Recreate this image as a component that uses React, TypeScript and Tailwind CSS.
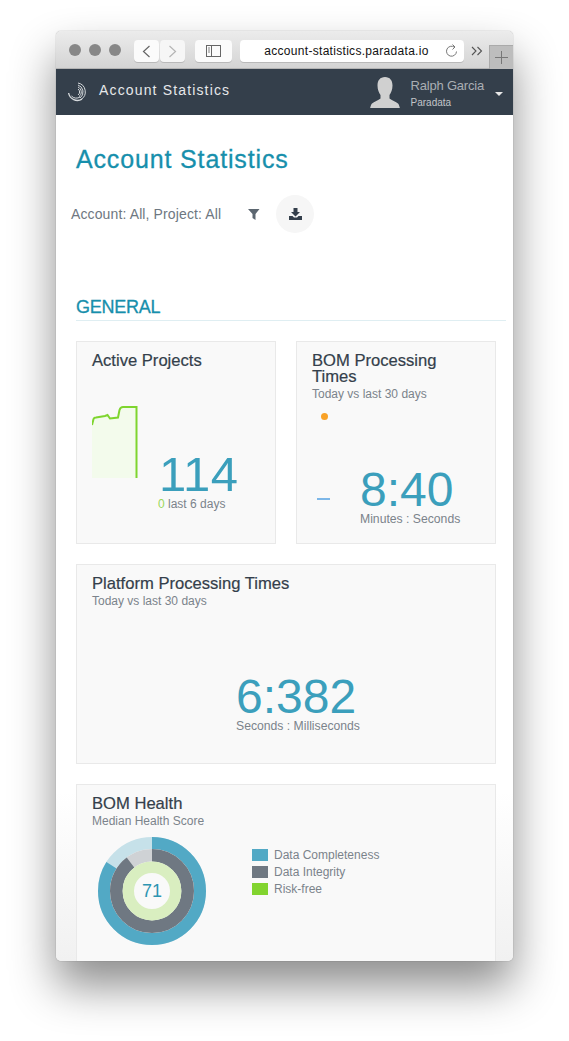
import React from "react";

const sans = "font-['Liberation_Sans',Arial,sans-serif]";

function Logo() {
  return (
    <svg width="20" height="20" viewBox="0 0 20 20" fill="none" stroke="#d5d9dc">
      <path d="M11 1 A9 9 0 0 1 14 17.500" strokeWidth="1" />
      <path d="M11 3 A7.400 7.400 0 0 1 13 16" strokeWidth="1" />
      <path d="M11 5 A5.600 5.600 0 0 1 12 14.600" strokeWidth="1" />
      <path d="M11 7 A3.600 3.600 0 0 1 11 13" strokeWidth="1" />
      <path d="M15 17.200 A9 9 0 0 1 1.600 11" strokeWidth="1.400" />
      <path d="M13 15 A6.500 6.500 0 0 1 4.500 14" strokeWidth="1" />
    </svg>
  );
}

function Avatar() {
  return (
    <svg width="30" height="31" viewBox="0 0 30 31" fill="#d0d0d0">
      <path d="M15 0c5 0 7.500 3.500 7.500 8.500 0 4-1.500 7.500-3 9.500v3.500c2 2 6.500 3 8.500 5 1 1 1.500 3 2 5H0c.5-2 1-4 2-5 2-2 6.500-3 8.500-5V18c-1.500-2-3-5.500-3-9.500C7.500 3.500 10 0 15 0z" />
    </svg>
  );
}

function Toolbar() {
  return (
    <div className="flex h-[38px] shrink-0 items-start border-b border-[#b4b4b4] bg-gradient-to-b from-[#ececec] to-[#d4d4d4]">
      <div className="mt-[13px] ml-[13px] flex gap-[8px]">
        <span className="h-[12px] w-[12px] rounded-full bg-[#878787]" />
        <span className="h-[12px] w-[12px] rounded-full bg-[#878787]" />
        <span className="h-[12px] w-[12px] rounded-full bg-[#878787]" />
      </div>
      <div className="mt-[9px] ml-[13px] flex gap-px">
        <div className="flex h-[22px] w-[25px] items-center justify-center rounded-[4px] bg-[#fbfbfb] shadow-[0_1px_0_#b9b9b9]">
          <svg width="9" height="13" viewBox="0 0 9 13" fill="none" stroke="#666" strokeWidth="1.200">
            <path d="M7.500 1 L1.500 6.500 L7.500 12" />
          </svg>
        </div>
        <div className="flex h-[22px] w-[25px] items-center justify-center rounded-[4px] bg-[#f6f6f6] shadow-[0_1px_0_#b9b9b9]">
          <svg width="9" height="13" viewBox="0 0 9 13" fill="none" stroke="#b5b5b5" strokeWidth="1.200">
            <path d="M1.500 1 L7.500 6.500 L1.500 12" />
          </svg>
        </div>
      </div>
      <div className="mt-[9px] ml-[10px] flex h-[22px] w-[37px] items-center justify-center rounded-[4px] bg-[#fbfbfb] shadow-[0_1px_0_#b9b9b9]">
        <svg width="15" height="12" viewBox="0 0 15 12" fill="none" stroke="#666">
          <rect x="0.500" y="0.500" width="14" height="11" />
          <path d="M5.500 .5 V11.500" />
          <path d="M2 3h2M2 5h2M2 7h2" strokeWidth=".8" />
        </svg>
      </div>
      <div className="relative mt-[9px] ml-[8px] flex h-[22px] w-[224px] items-center justify-center rounded-[4px] bg-white pr-[11px] shadow-[0_1px_0_#b9b9b9]">
        <span className={`${sans} text-[12px] tracking-[0.3px] text-[#111]`}>account-statistics.paradata.io</span>
        <svg className="absolute top-[4px] right-[6px]" width="13" height="14" viewBox="0 0 13 14" fill="none" stroke="#777">
          <path d="M9.500 3.200 A5 5 0 1 0 11.500 7.500" />
          <path d="M7.500 0.500 L10 3 L7.500 5.500" />
        </svg>
      </div>
      <span className="mt-[14px] ml-[7px] h-[12px] w-[12px]">
        <svg width="12" height="12" viewBox="0 0 12 12" fill="none" stroke="#555" strokeWidth="1.100">
          <path d="M1 2 L5 6 L1 10 M6.500 2 L10.500 6 L6.500 10" />
        </svg>
      </span>
      <div className="mt-[14px] ml-[6px] flex h-[24px] w-[24px] items-center justify-center border-t border-l border-[#aaa] bg-[#bdbdbd]">
        <svg width="13" height="13" viewBox="0 0 13 13" stroke="#777">
          <path d="M6.500 0 V13 M0 6.500 H13" />
        </svg>
      </div>
    </div>
  );
}

function Navbar() {
  return (
    <div className={`${sans} flex h-[46px] shrink-0 items-center bg-[#343f4b] pr-[10px] pl-[11px]`}>
      <Logo />
      <span className="mb-[4px] ml-[12px] text-[14px] tracking-[1.150px] text-[#e6e8ea]">Account Statistics</span>
      <div className="ml-auto flex items-center">
        <Avatar />
        <div className="mt-[3px] ml-[11px] flex flex-col">
          <span className="text-[13px] leading-[16px] tracking-[-0.2px] text-[#a9aeb3]">Ralph Garcia</span>
          <span className="mt-[3px] text-[10px] leading-[12px] text-[#c2c5c9]">Paradata</span>
        </div>
        <span className="mt-[3px] ml-[11px] h-0 w-0 border-x-[4px] border-t-[4px] border-x-transparent border-t-[#e8e8e8]" />
      </div>
    </div>
  );
}

function Card({ title, sub, className, children }: { title: string; sub?: string; className: string; children?: React.ReactNode }) {
  return (
    <div className={`border border-[#e9e9e9] bg-[#f9f9f9] pt-[11px] pl-[15px] ${className}`}>
      <div className="text-[16.600px] leading-[16px] whitespace-pre-line text-[#343f4b] [-webkit-text-stroke:0.2px_#343f4b]">{title}</div>
      {sub && <div className="text-[12px] leading-[18px] text-[#7b838b]">{sub}</div>}
      {children}
    </div>
  );
}

function Donut() {
  return (
    <svg width="110" height="110" viewBox="0 0 110 110" fill="none" className="-rotate-90">
      <circle cx="55" cy="55" r="48" stroke="#c6e1e9" strokeWidth="12" />
      <circle cx="55" cy="55" r="48" stroke="#52a9c5" strokeWidth="12" pathLength="100" strokeDasharray="84 100" />
      <circle cx="55" cy="55" r="35.700" stroke="#cfd2d5" strokeWidth="12.600" />
      <circle cx="55" cy="55" r="35.700" stroke="#6f7882" strokeWidth="12.600" pathLength="100" strokeDasharray="89.700 100" />
      <circle cx="55" cy="55" r="23.700" stroke="#d9eec0" strokeWidth="11.400" />
    </svg>
  );
}

function Legend({ color, label }: { color: string; label: string }) {
  return (
    <div className="flex h-[17px] items-center">
      <span className={`h-[12px] w-[16px] ${color}`} />
      <span className="ml-[6px] text-[12px] text-[#7b838b]">{label}</span>
    </div>
  );
}

export default function App() {
  return (
    <div className={`${sans} h-[1041px] w-[569px] overflow-hidden bg-white pt-[31px] pl-[56px]`}>
      <div className="flex h-[930px] w-[457px] flex-col overflow-hidden rounded-[5px] shadow-[0_25px_45px_rgba(0,0,0,0.45),0_0_1px_rgba(0,0,0,0.5)]">
        <Toolbar />
        <Navbar />
        <div className="min-h-0 flex-1 overflow-hidden bg-gradient-to-b from-white from-[80%] to-[#f1f1f1]">
          <h1 className="mt-[28px] ml-[20px] text-[25px] leading-[32px] tracking-[0.85px] text-[#178fac] [-webkit-text-stroke:0.3px_#178fac]">Account Statistics</h1>
          <div className="mt-[20px] ml-[15px] flex h-[38px] items-center">
            <span className="text-[14px] tracking-[0.12px] text-[#6e7781]">Account: All, Project: All</span>
            <svg className="ml-[27px]" width="12" height="11" viewBox="0 0 12 11" fill="#5c6670">
              <path d="M0 0h11.500L7.500 5v6L4.500 9V5z" />
            </svg>
            <div className="ml-[16px] flex h-[38px] w-[38px] items-center justify-center rounded-full bg-[#f6f6f6]">
              <svg width="13" height="12" viewBox="0 0 13 12" fill="#343f4b">
                <path d="M4.500 0h4v4h2.500L6.500 8.500 2 4h2.500z" />
                <path d="M0 8h3.500l1.500 1.500h3L9.500 8H13v4H0z" />
              </svg>
            </div>
          </div>
          <div className="mt-[64px] ml-[20px] h-[24px] w-[430px] border-b border-[#dfeef2] text-[18px] leading-[20px] tracking-[-0.25px] text-[#178fac] [-webkit-text-stroke:0.3px_#178fac]">GENERAL</div>
          <div className="mt-[20px] ml-[20px] grid w-[420px] grid-cols-2 gap-[20px]">
            <Card title="Active Projects" className="h-[203px]">
              <div className="mt-[37px] flex">
                <svg width="46" height="74" viewBox="0 0 46 74" className="shrink-0">
                  <path d="M0 19 L1.500 13 Q2 11.500 4 11.500 L13 10 L15.500 9 L18 12.500 L26 11.500 L27.500 4 Q28.500 1 31 1 L44 1 V72 H0 Z" fill="#f3fbec" />
                  <path d="M0 19 L1.500 13 Q2 11.500 4 11.500 L13 10 L15.500 9 L18 12.500 L26 11.500 L27.500 4 Q28.500 1 31 1 L44.500 1 V72" fill="none" stroke="#7fd52f" strokeWidth="2" />
                </svg>
                <div className="mt-[45px] ml-[21px] flex flex-col">
                  <span className="text-[49px] leading-[46px] tracking-[0.5px] text-[#3b9fbc]">114</span>
                  <span className="-ml-px text-[12px] leading-[14px] text-[#7b838b]"><span className="text-[#9ad85a]">0</span> last 6 days</span>
                </div>
              </div>
            </Card>
            <Card title={"BOM Processing\nTimes"} sub="Today vs last 30 days" className="h-[203px]">
              <span className="mt-[10px] ml-[9px] block h-[7px] w-[7px] rounded-full bg-[#f9a227]" />
              <div className="flex">
                <span className="mt-[78px] ml-[5px] h-[2px] w-[13px] bg-[#7db7e8]" />
                <div className="mt-[48px] ml-[30px] flex flex-col">
                  <span className="text-[48px] leading-[44px] text-[#3b9fbc]">8:40</span>
                  <span className="text-[12.200px] leading-[14px] text-[#7b838b]">Minutes : Seconds</span>
                </div>
              </div>
            </Card>
            <Card title="Platform Processing Times" sub="Today vs last 30 days" className="col-span-2 h-[200px]">
              <div className="mt-[65px] ml-[144px] flex w-[130px] flex-col">
                <span className="text-[48px] leading-[44px] text-[#3b9fbc]">6:382</span>
                <span className="text-[12.200px] leading-[14px] whitespace-nowrap text-[#7b838b]">Seconds : Milliseconds</span>
              </div>
            </Card>
            <Card title="BOM Health" sub="Median Health Score" className="col-span-2 h-[200px]">
              <div className="mt-[6px] flex">
                <div className="relative ml-[5px] h-[110px] w-[110px]">
                  <Donut />
                  <span className="absolute inset-0 flex items-center justify-center text-[18px] text-[#2d95b2]">71</span>
                </div>
                <div className="mt-[10px] ml-[45px]">
                  <Legend color="bg-[#52a9c5]" label="Data Completeness" />
                  <Legend color="bg-[#6f7882]" label="Data Integrity" />
                  <Legend color="bg-[#82d42f]" label="Risk-free" />
                </div>
              </div>
            </Card>
          </div>
        </div>
      </div>
    </div>
  );
}
